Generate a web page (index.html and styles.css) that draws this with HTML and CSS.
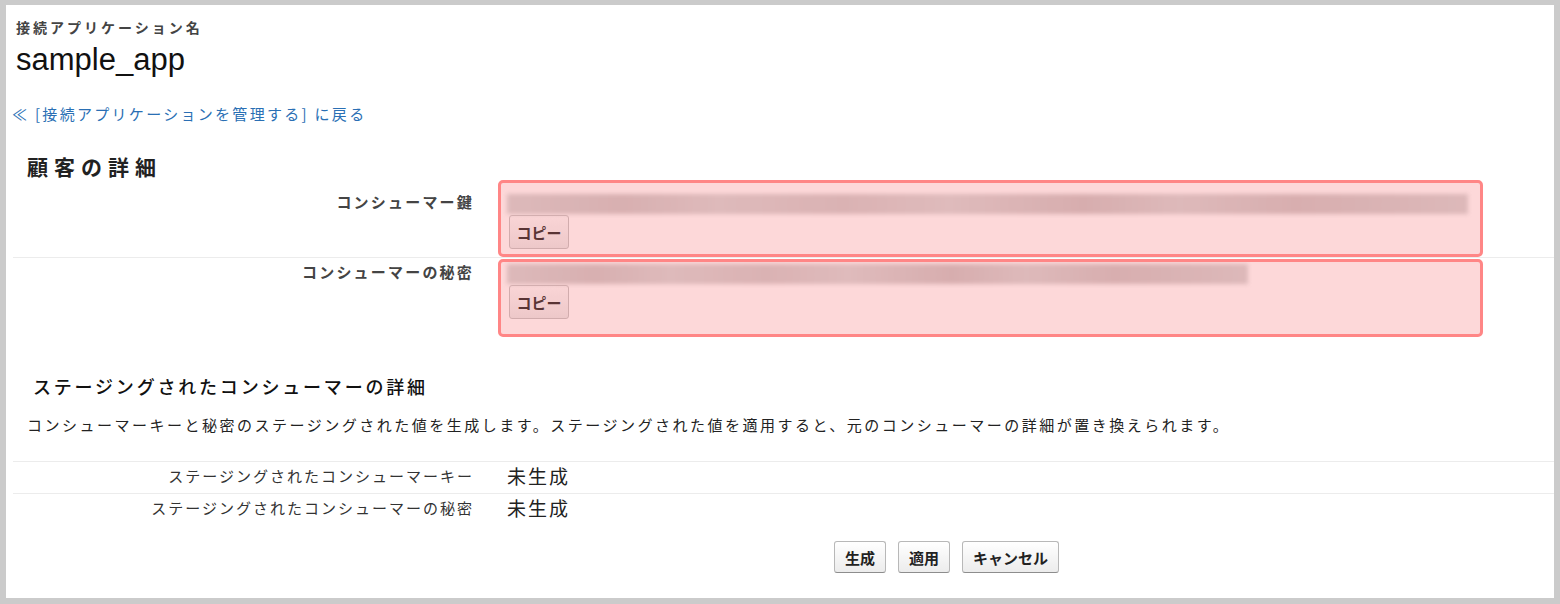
FILE: index.html
```html
<!DOCTYPE html>
<html lang="ja">
<head>
    <meta charset="UTF-8">
    <meta name="viewport" content="width=device-width, initial-scale=1.0">
    <title>sample_app - 接続アプリケーション</title>
    <link rel="stylesheet" href="styles.css">
</head>
<body>
    <div class="frame">
        <div class="app-header">
            <div class="app-caption">接続アプリケーション名</div>
            <h1 class="app-name">sample_app</h1>
        </div>
        <a class="back-link" href="#">≪ [接続アプリケーションを管理する] に戻る</a>

        <section class="detail">
            <h2 class="section-title">顧客の詳細</h2>
            <div class="field-table">
                <div class="field-row">
                    <div class="field-label">コンシューマー鍵</div>
                    <div class="field-value">
                        <div class="masked masked-key"></div>
                        <button class="btn btn-copy" type="button">コピー</button>
                    </div>
                    <div class="highlight highlight-key"></div>
                </div>
                <div class="field-row">
                    <div class="field-label">コンシューマーの秘密</div>
                    <div class="field-value">
                        <div class="masked masked-secret"></div>
                        <button class="btn btn-copy" type="button">コピー</button>
                    </div>
                    <div class="highlight highlight-secret"></div>
                </div>
            </div>
        </section>

        <section class="staging">
            <h2 class="staging-title">ステージングされたコンシューマーの詳細</h2>
            <p class="staging-desc">コンシューマーキーと秘密のステージングされた値を生成します。ステージングされた値を適用すると、元のコンシューマーの詳細が置き換えられます。</p>
            <div class="staged-table">
                <div class="staged-row">
                    <div class="field-label">ステージングされたコンシューマーキー</div>
                    <div class="staged-value">未生成</div>
                </div>
                <div class="staged-row">
                    <div class="field-label">ステージングされたコンシューマーの秘密</div>
                    <div class="staged-value">未生成</div>
                </div>
            </div>
            <div class="actions">
                <button class="btn" type="button">生成</button>
                <button class="btn" type="button">適用</button>
                <button class="btn" type="button">キャンセル</button>
            </div>
        </section>
    </div>
</body>
</html>
```

FILE: styles.css
```css
body {
    margin: 0;
    padding: 5px 6px 6px 6px;
    background-color: #cbcbcb;
    font-family: "Noto Sans CJK JP", "Noto Sans", sans-serif;
    color: #222;
}
.frame {
    background: #fff;
    height: 593px;
    overflow: hidden;
}
.app-header {
    padding: 12px 0 0 10px;
}
.app-caption {
    font-size: 14px;
    line-height: 20px;
    font-weight: bold;
    letter-spacing: 3px;
    color: #444;
}
.app-name {
    margin: 5px 0 0 0;
    font-family: "Liberation Sans", Arial, sans-serif;
    font-size: 31px;
    line-height: 36px;
    font-weight: normal;
    color: #111;
}
.back-link {
    display: inline-block;
    margin: 26px 0 0 6px;
    font-size: 15px;
    line-height: 20px;
    letter-spacing: 2.3px;
    color: #2a6fb4;
    text-decoration: none;
}
.section-title {
    margin: 28px 0 0 21px;
    font-size: 21px;
    line-height: 26px;
    font-weight: bold;
    letter-spacing: 6px;
    color: #222;
}
.field-table {
    margin: 9px 0 0 7px;
}
.field-row,
.staged-row {
    position: relative;
    display: grid;
    grid-template-columns: 461px 1fr;
    column-gap: 33px;
}
.field-row {
    border-bottom: 1px solid #ececec;
}
.field-row:last-child {
    border-bottom: none;
}
.field-label {
    padding-top: 4px;
    font-size: 15px;
    line-height: 20px;
    letter-spacing: 2px;
    text-align: right;
    color: #333;
}
.field-table .field-label {
    font-weight: bold;
    color: #444;
    letter-spacing: 2.2px;
}
.field-value {
    padding: 6px 0 8px 0;
}
.masked {
    height: 20px;
    filter: blur(2px);
    background: linear-gradient(90deg, #d7d9d9 0%, #d1cdcd 12%, #d9dada 22%, #d4d0d0 35%, #dadbdb 46%, #d0caca 60%, #d8d9d9 70%, #d1cbcb 82%, #d7d8d8 100%);
}
.masked-key {
    width: 961px;
}
.masked-secret {
    width: 741px;
}
.btn {
    height: 32px;
    padding: 0 10px;
    font-family: "Noto Sans CJK JP", "Noto Sans", sans-serif;
    font-size: 15px;
    font-weight: bold;
    color: #222;
    background: linear-gradient(#ffffff, #ececec);
    border: 1px solid #b8b8b8;
    border-bottom-color: #8d8d8d;
    border-radius: 3px;
    cursor: pointer;
}
.btn-copy {
    display: block;
    margin: 1px 0 0 2px;
    height: 34px;
    width: 60px;
    padding: 0;
    font-size: 15px;
    color: #333;
    background: linear-gradient(#fbfbfb, #ececec);
    border-color: #c9c9c9;
}
/* annotation boxes drawn over the credential rows */
.highlight {
    position: absolute;
    left: 485px;
    width: 985px;
    box-sizing: border-box;
    border: 3px solid #ff8686;
    border-radius: 5px;
    background: rgba(245, 60, 65, 0.2);
    pointer-events: none;
}
.highlight-key {
    top: -8px;
    height: 77px;
}
.highlight-secret {
    top: 1px;
    height: 78px;
}
.staging-title {
    margin: 45px 0 0 27px;
    font-size: 18px;
    line-height: 28px;
    font-weight: 500;
    letter-spacing: 2.8px;
    color: #111;
}
.staging-desc {
    margin: 14px 0 0 21px;
    font-size: 15px;
    line-height: 22px;
    letter-spacing: 2.5px;
    color: #222;
}
.staged-table {
    margin: 25px 0 0 7px;
}
.staged-row {
    height: 31px;
    border-top: 1px solid #ececec;
}
.staged-value {
    padding-top: 4px;
    font-size: 19px;
    line-height: 20px;
    letter-spacing: 2px;
    color: #222;
}
.actions {
    display: flex;
    gap: 12px;
    margin: 16px 0 0 828px;
}
```
